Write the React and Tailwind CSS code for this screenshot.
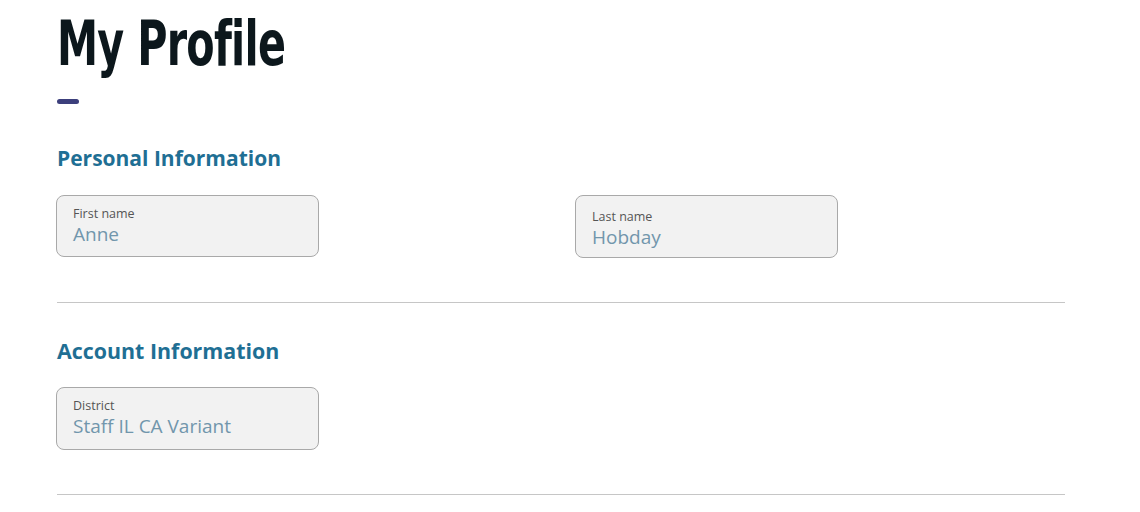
export default function App() {
  const body = { fontFamily: '"Open Sans", "Liberation Sans", sans-serif' };
  const Field = ({ label, value, extra = "" }) => (
    <div className={`w-[263px] -ml-px h-[62px] rounded-[8px] border border-[#a9a9a9] bg-[#f2f2f2] pl-4 pt-[10px] ${extra}`}>
      <div className="text-[12.5px] leading-[16px] text-[#555]">{label}</div>
      <div className="text-[19px] leading-[24px] text-[#7196ac]">{value}</div>
    </div>
  );
  return (
    <div className="bg-white min-h-[512px] pl-[57px] pr-[75px]" style={body}>
      <h1
        className="text-[62px] leading-[80px] font-bold text-[#0c171c] tracking-[-1px] origin-left scale-x-[0.74] pt-[4px]"
        style={{ fontFamily: '"DejaVu Sans Condensed", "Liberation Sans Narrow", sans-serif' }}
      >
        My Profile
      </h1>
      <div className="w-[22px] h-[5px] rounded-full bg-[#3c3f7c] mt-[15px]" />
      <h2 className="mt-[40px] text-[21px] leading-[28px] font-bold text-[#1f6f94]">Personal Information</h2>
      <div className="grid grid-cols-2 gap-[30px] mt-[23px]">
        <Field label="First name" value="Anne" />
        <Field label="Last name" value="Hobday" extra="h-[63px] pt-[13px]" />
      </div>
      <div className="h-px bg-[#c6c6c6] mt-[44px]" />
      <h2 className="mt-[34px] text-[21.4px] leading-[28px] font-bold text-[#1f6f94]">Account Information</h2>
      <div className="mt-[22px]">
        <Field label="District" value="Staff IL CA Variant" extra="h-[63px]" />
      </div>
      <div className="h-px bg-[#c6c6c6] mt-[44px]" />
    </div>
  );
}
